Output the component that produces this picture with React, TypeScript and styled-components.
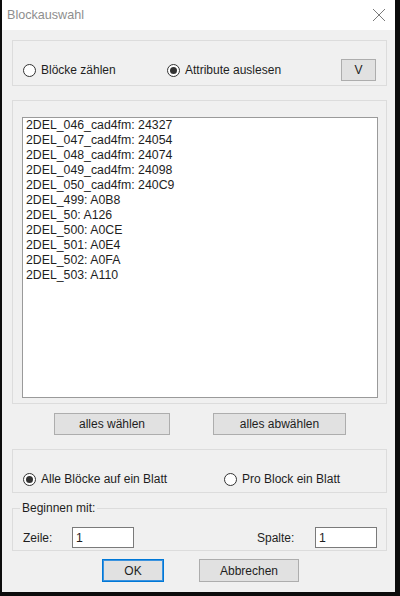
import React from 'react';
import styled, { createGlobalStyle } from 'styled-components';

const Global = createGlobalStyle`
  html, body { margin: 0; padding: 0; background: #0c0c0c; }
  body {
    font-family: "Liberation Sans", Arial, sans-serif;
    font-size: 12px;
    color: #1e1e1e;
  }
  * { box-sizing: border-box; }
`;

const Dialog = styled.div`
  margin-left: 2px;
  width: 393px;
  height: 592px;
  background: #f0f0f0;
  display: flex;
  flex-direction: column;
`;

const TitleBar = styled.div`
  height: 30px;
  flex: none;
  background: #ffffff;
  display: flex;
  align-items: center;
  justify-content: space-between;
  padding: 0 9px 0 5px;
  color: #8e8e8e;
  font-size: 12.6px;
`;

const Content = styled.div`
  display: flex;
  flex-direction: column;
  padding: 10px 8px 0 10px;
`;

const Group = styled.div<{ $h: number; $mt: number; $pt: number; $pl?: number }>`
  height: ${p => p.$h}px;
  margin-top: ${p => p.$mt}px;
  padding: ${p => p.$pt}px 10px 0 ${p => p.$pl ?? 10}px;
  border: 1px solid #dcdcdc;
`;

const TopRow = styled.div`
  display: grid;
  grid-template-columns: 144px 174px 35px;
  align-items: center;
  height: 22px;
`;

const RadioRow = styled.div`
  display: flex;
  align-items: center;
  height: 16px;
`;

const RadioLabel = styled.label<{ $w?: number }>`
  display: flex;
  align-items: center;
  gap: 5px;
  width: ${p => (p.$w ? `${p.$w}px` : 'auto')};
  white-space: nowrap;
`;

const RadioCircle = styled.span<{ $on?: boolean }>`
  width: 13px;
  height: 13px;
  border-radius: 50%;
  border: 1px solid #333333;
  background: #ffffff;
  display: flex;
  align-items: center;
  justify-content: center;
  flex: none;
  &::after {
    content: '';
    width: 7px;
    height: 7px;
    border-radius: 50%;
    background: #333333;
    display: ${p => (p.$on ? 'block' : 'none')};
  }
`;

const Button = styled.button<{ $w: number; $h?: number; $default?: boolean }>`
  width: ${p => p.$w}px;
  height: ${p => p.$h ?? 22}px;
  margin: 0;
  padding: 0;
  font-family: "Liberation Sans", Arial, sans-serif;
  font-size: 12px;
  color: #1e1e1e;
  background: #e1e1e1;
  border: 1px solid ${p => (p.$default ? '#0078d7' : '#adadad')};
  box-shadow: ${p => (p.$default ? 'inset 0 0 0 1px #3c93de' : 'none')};
  display: flex;
  align-items: center;
  justify-content: center;
`;

const ListBox = styled.div`
  width: 356px;
  height: 281px;
  background: #ffffff;
  border: 1px solid #9a9a9a;
  padding: 0 0 0 3px;
  font-size: 12.3px;
  line-height: 15px;
  color: #1e1e1e;
`;

const ListItem = styled.div`
  white-space: nowrap;
`;

const ButtonRow = styled.div<{ $mt: number; $pl: number; $gap: number }>`
  display: flex;
  margin-top: ${p => p.$mt}px;
  padding-left: ${p => p.$pl}px;
  gap: ${p => p.$gap}px;
`;

const FieldSet = styled.fieldset`
  margin: 8px 0 0 0;
  padding: 12px 9px 2px 10px;
  border: 1px solid #dcdcdc;
  min-width: 0;
`;

const Legend = styled.legend`
  padding: 0 2px;
  margin-left: -3px;
  line-height: 14px;
  font-size: 12px;
`;

const FieldRow = styled.div`
  display: flex;
  align-items: center;
  height: 21px;
`;

const FieldLabel = styled.span<{ $w: number }>`
  width: ${p => p.$w}px;
  flex: none;
`;

const Spacer = styled.div`
  flex: 1;
`;

const TextInput = styled.input`
  width: 62px;
  height: 21px;
  margin: 0;
  padding: 0 3px;
  border: 1px solid #7a7a7a;
  background: #ffffff;
  font-family: "Liberation Sans", Arial, sans-serif;
  font-size: 12.3px;
  color: #1e1e1e;
  outline: none;
`;

const items = [
  '2DEL_046_cad4fm: 24327',
  '2DEL_047_cad4fm: 24054',
  '2DEL_048_cad4fm: 24074',
  '2DEL_049_cad4fm: 24098',
  '2DEL_050_cad4fm: 240C9',
  '2DEL_499: A0B8',
  '2DEL_50: A126',
  '2DEL_500: A0CE',
  '2DEL_501: A0E4',
  '2DEL_502: A0FA',
  '2DEL_503: A110',
];

const CloseIcon = () => (
  <svg width="14" height="14" viewBox="0 0 14 14">
    <path d="M1 1 L13 13 M13 1 L1 13" stroke="#7a7a7a" strokeWidth="1" fill="none" />
  </svg>
);

export default function App() {
  return (
    <>
      <Global />
      <Dialog>
        <TitleBar>
          <span>Blockauswahl</span>
          <CloseIcon />
        </TitleBar>
        <Content>
          <Group $h={46} $mt={0} $pt={18}>
            <TopRow>
              <RadioLabel>
                <RadioCircle />
                Blöcke zählen
              </RadioLabel>
              <RadioLabel>
                <RadioCircle $on />
                Attribute auslesen
              </RadioLabel>
              <Button $w={35}>V</Button>
            </TopRow>
          </Group>

          <Group $h={304} $mt={14} $pt={16} $pl={9}>
            <ListBox>
              {items.map(t => (
                <ListItem key={t}>{t}</ListItem>
              ))}
            </ListBox>
          </Group>

          <ButtonRow $mt={9} $pl={42} $gap={43}>
            <Button $w={116}>alles wählen</Button>
            <Button $w={133}>alles abwählen</Button>
          </ButtonRow>

          <Group $h={44} $mt={14} $pt={21}>
            <RadioRow>
              <RadioLabel $w={201}>
                <RadioCircle $on />
                Alle Blöcke auf ein Blatt
              </RadioLabel>
              <RadioLabel>
                <RadioCircle />
                Pro Block ein Blatt
              </RadioLabel>
            </RadioRow>
          </Group>

          <FieldSet>
            <Legend>Beginnen mit:</Legend>
            <FieldRow>
              <FieldLabel $w={49}>Zeile:</FieldLabel>
              <TextInput defaultValue="1" />
              <Spacer />
              <FieldLabel $w={58}>Spalte:</FieldLabel>
              <TextInput defaultValue="1" />
            </FieldRow>
          </FieldSet>

          <ButtonRow $mt={8} $pl={90} $gap={35}>
            <Button $w={62} $h={23} $default>OK</Button>
            <Button $w={100} $h={23}>Abbrechen</Button>
          </ButtonRow>
        </Content>
      </Dialog>
    </>
  );
}
